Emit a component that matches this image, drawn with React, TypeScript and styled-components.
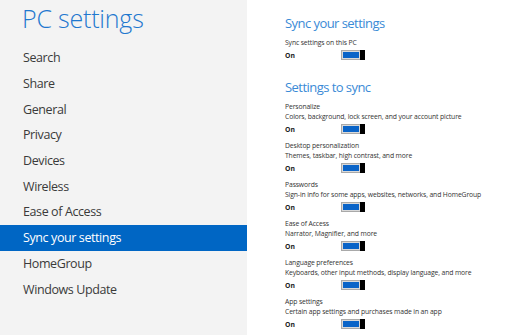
import React from "react";
import styled, { createGlobalStyle } from "styled-components";

const Global = createGlobalStyle`
  html, body { margin: 0; padding: 0; background: #ffffff; }
  body { font-family: "Open Sans", "Noto Sans", sans-serif; }
  #root { width: 508px; height: 335px; overflow: hidden; }
`;

const Page = styled.div`
  display: flex;
  width: 508px;
  height: 335px;
  background: #ffffff;
`;

const Sidebar = styled.nav`
  width: 247px;
  flex-shrink: 0;
  background: #f3f3f3;
  display: flex;
  flex-direction: column;
`;

const Title = styled.h1`
  margin: 0;
  padding: 1px 0 0 22px;
  height: 44px;
  font-size: 25px;
  font-weight: 300;
  color: #1f78cf;
  letter-spacing: -0.2px;
  line-height: 34px;
`;

const Menu = styled.ul`
  list-style: none;
  margin: 0;
  padding: 0;
`;

const MenuItem = styled.li<{ $active?: boolean }>`
  height: 25.7px;
  display: flex;
  align-items: center;
  padding-left: 23px;
  font-size: 12.5px;
  letter-spacing: -0.4px;
  color: ${(p) => (p.$active ? "#ffffff" : "#3a3a3a")};
  background: ${(p) => (p.$active ? "#0066c4" : "transparent")};
`;

const Content = styled.main`
  flex: 1;
  padding: 13px 0 0 38px;
  display: flex;
  flex-direction: column;
`;

const Heading = styled.h2<{ $top?: number }>`
  margin: ${(p) => p.$top ?? 0}px 0 5px 0;
  font-size: 13px;
  font-weight: 400;
  letter-spacing: -0.55px;
  color: #3a8ad6;
  line-height: 20px;
`;

const Group = styled.section`
  display: flex;
  flex-direction: column;
  margin-bottom: 6px;
`;

const Label = styled.div`
  font-size: 6.8px;
  letter-spacing: -0.12px;
  line-height: 10px;
  color: #333333;
  white-space: nowrap;
`;

const StateRow = styled.div`
  display: flex;
  align-items: center;
  height: 12px;
  margin-top: 1px;
`;

const StateText = styled.span`
  width: 56px;
  font-size: 6.8px;
  font-weight: 700;
  color: #222222;
`;

const Toggle = styled.span`
  display: flex;
  width: 24px;
  height: 10px;
`;

const Track = styled.span`
  flex: 1;
  box-sizing: border-box;
  border: 1px solid #a9a9a9;
  border-right: none;
  background: #0a64c8;
  box-shadow: inset 0 0 0 1px #d9d9d9;
`;

const Thumb = styled.span`
  width: 5px;
  background: #000000;
`;

const menu = [
  "Search",
  "Share",
  "General",
  "Privacy",
  "Devices",
  "Wireless",
  "Ease of Access",
  "Sync your settings",
  "HomeGroup",
  "Windows Update",
];

const settings = [
  ["Personalize", "Colors, background, lock screen, and your account picture"],
  ["Desktop personalization", "Themes, taskbar, high contrast, and more"],
  ["Passwords", "Sign-in info for some apps, websites, networks, and HomeGroup"],
  ["Ease of Access", "Narrator, Magnifier, and more"],
  ["Language preferences", "Keyboards, other input methods, display language, and more"],
  ["App settings", "Certain app settings and purchases made in an app"],
];

const OnSwitch = () => (
  <StateRow>
    <StateText>On</StateText>
    <Toggle>
      <Track />
      <Thumb />
    </Toggle>
  </StateRow>
);

export default function App() {
  return (
    <>
      <Global />
      <Page>
        <Sidebar>
          <Title>PC settings</Title>
          <Menu>
            {menu.map((m) => (
              <MenuItem key={m} $active={m === "Sync your settings"}>
                {m}
              </MenuItem>
            ))}
          </Menu>
        </Sidebar>
        <Content>
          <Heading>Sync your settings</Heading>
          <Group>
            <Label>Sync settings on this PC</Label>
            <OnSwitch />
          </Group>
          <Heading $top={10}>Settings to sync</Heading>
          {settings.map(([t, d]) => (
            <Group key={t}>
              <Label>{t}</Label>
              <Label>{d}</Label>
              <OnSwitch />
            </Group>
          ))}
        </Content>
      </Page>
    </>
  );
}
